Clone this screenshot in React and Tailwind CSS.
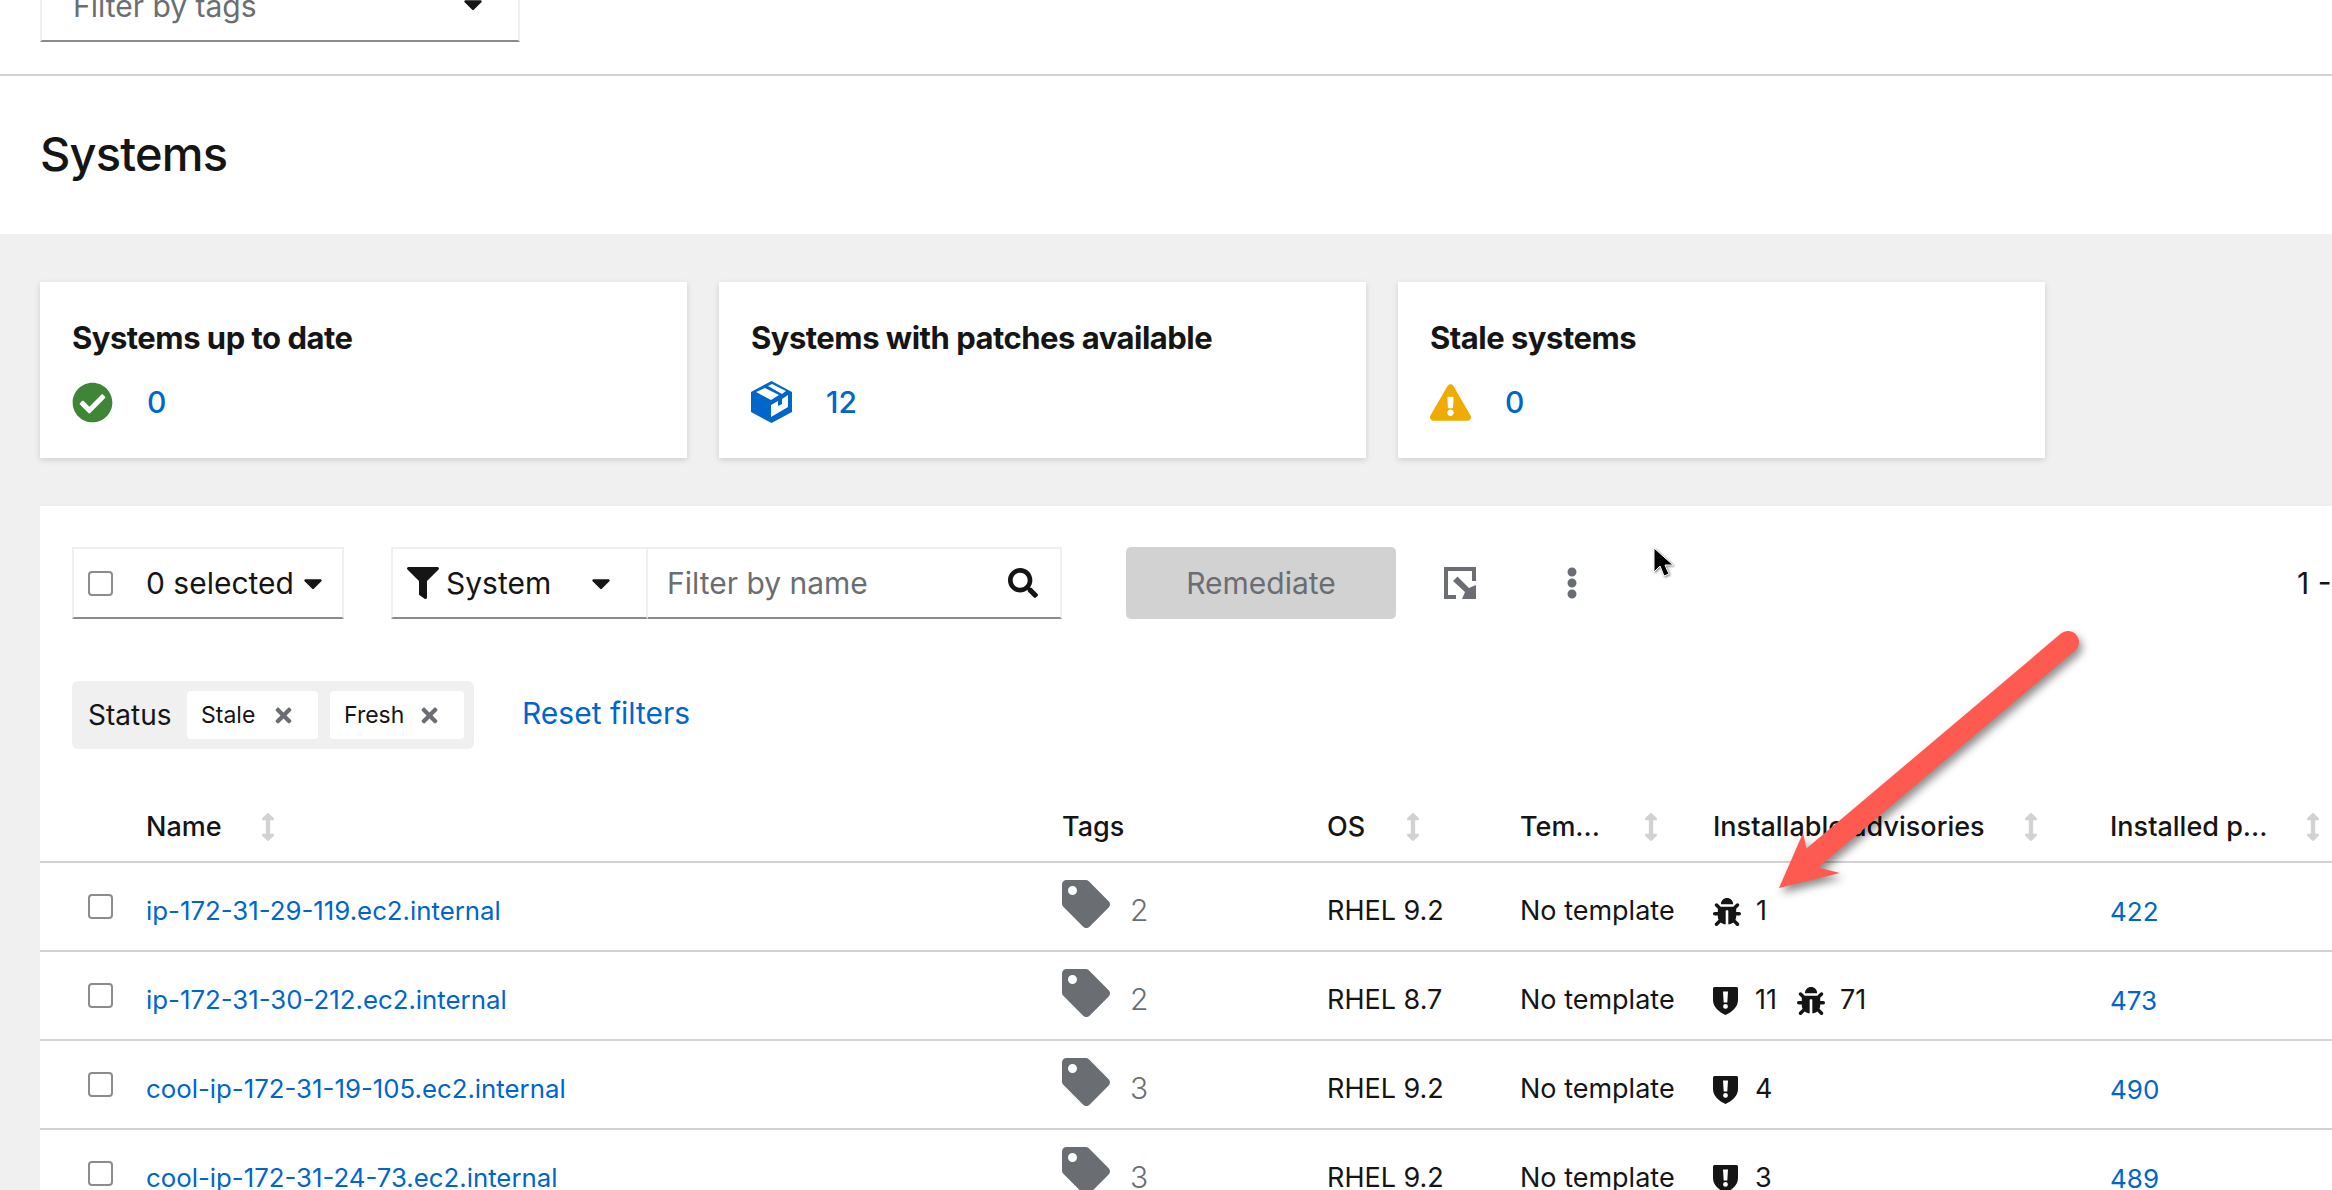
import { FaCheckCircle, FaExclamationTriangle, FaFilter, FaSearch, FaTag, FaBug, FaTimes, FaEllipsisV, FaArrowsAltV, FaCaretDown } from 'react-icons/fa'

const rows = [
  { name: 'ip-172-31-29-119.ec2.internal', tags: 2, os: 'RHEL 9.2', sec: null, bugs: 1, pkgs: 422 },
  { name: 'ip-172-31-30-212.ec2.internal', tags: 2, os: 'RHEL 8.7', sec: 11, bugs: 71, pkgs: 473 },
  { name: 'cool-ip-172-31-19-105.ec2.internal', tags: 3, os: 'RHEL 9.2', sec: 4, bugs: null, pkgs: 490 },
  { name: 'cool-ip-172-31-24-73.ec2.internal', tags: 3, os: 'RHEL 9.2', sec: 3, bugs: null, pkgs: 489 },
]

const gridCols = 'grid grid-cols-[106px_916px_265px_193px_193px_397px_1fr]'

function Caret({ className }) {
  return <FaCaretDown className={`text-[#151515] text-[30px] ${className || ''}`} />
}

function Checkbox() {
  return <span className="block w-[25px] h-[25px] rounded-[4px] border-2 border-[#8a8d90] bg-white" />
}

function PackageIcon() {
  return (
    <svg width="41" height="42" viewBox="0 0 41 42">
      <path fill="#0066cc" d="M20.5 0L41 11v20L20.5 42 0 31V11z" />
      <path fill="#fff" d="M5 11l9-4 14 7-8 5zM17 5l4-2 14 7-4 3zM20 36V24l7-4v5l4-2v-5l6-4v12z" />
    </svg>
  )
}

function ShieldIcon() {
  return (
    <svg width="25" height="28" viewBox="0 0 25 28">
      <path
        fill="#151515"
        fillRule="evenodd"
        d="M1.5 0h22A1.5 1.5 0 0 1 25 1.5V13c0 7-6 12-12.5 15C6 25 0 20 0 13V1.5A1.5 1.5 0 0 1 1.5 0zM10 4.5h5l-.7 11h-3.6zM12.5 17a2.4 2.4 0 1 0 0 4.8 2.4 2.4 0 0 0 0-4.8z"
      />
    </svg>
  )
}

function ExportIcon() {
  return (
    <svg width="32" height="32" viewBox="0 0 32 32" fill="#6a6e73">
      <path d="M0 0H32V14H28V4H4V28H12V32H0Z" />
      <path d="M9 14L13.500 9.500L25 21L32 18V32H18L21 25Z" />
    </svg>
  )
}

function SortIcon() {
  return <FaArrowsAltV className="text-[#d2d2d2] text-[28px]" />
}

function StatCard({ title, icon, value }) {
  return (
    <div className="w-[647px] h-[176px] bg-white shadow-[0_2px_6px_rgba(3,3,3,0.14)] pl-[32px] pt-[40px]">
      <div className="text-[31px] leading-[32px] font-bold text-[#151515] tracking-[-0.5px] whitespace-nowrap">{title}</div>
      <div className="flex items-center mt-[27px] h-[42px]">
        <span className="w-[75px] flex items-center">{icon}</span>
        <span className="text-[30px] font-medium text-[#0066cc]">{value}</span>
      </div>
    </div>
  )
}

function Chip({ label, width }) {
  return (
    <span className={`flex items-center justify-between h-[48px] bg-white rounded-[4px] pl-[14px] pr-[23px] text-[23px] text-[#151515] ${width}`}>
      {label}
      <FaTimes className="text-[#6a6e73] text-[23px]" />
    </span>
  )
}

function HeaderCell({ label, sortGap }) {
  return (
    <div className="flex items-center font-medium mt-[8px]">
      <span className="whitespace-nowrap">{label}</span>
      {sortGap && <span className={`flex justify-center ${sortGap}`}><SortIcon /></span>}
    </div>
  )
}

export default function App() {
  return (
    <div className="relative w-[2332px] h-[1190px] overflow-hidden bg-white font-['Inter',sans-serif] text-[#151515]">

      {/* Tag filter, cut off by the top of the window */}
      <div className="h-[76px] border-b-2 border-[#d2d2d2] flex items-end overflow-hidden pl-[40px] pb-[32px]">
        <div className="shrink-0 w-[480px] h-[72px] border-x-2 border-[#f0f0f0] border-b-2 border-b-[#8a8d90] flex items-center justify-between pl-[31px] pr-[30px] text-[30px] text-[#6a6e73]">
          <span className="pt-[3px]">Filter by tags</span>
          <Caret className="-mt-[3px]" />
        </div>
      </div>

      {/* Title */}
      <div className="h-[158px] pl-[40px] flex items-center">
        <h1 className="text-[47px] font-medium tracking-[-0.8px] -mt-[2px]">Systems</h1>
      </div>

      <div className="bg-[#f0f0f0] h-[956px] pt-[48px] pl-[40px]">
        <div className="flex gap-[32px]">
          <StatCard title="Systems up to date" value="0" icon={<FaCheckCircle className="text-[#3e8635] text-[41px]" />} />
          <StatCard title="Systems with patches available" value="12" icon={<PackageIcon />} />
          <StatCard title="Stale systems" value="0" icon={<FaExclamationTriangle className="text-[#f0ab00] text-[41px]" />} />
        </div>

        {/* Table panel */}
        <div className="mt-[48px] bg-white h-[700px] w-[2292px] overflow-hidden">
          <div className="flex items-center h-[72px] mt-[41px] ml-[32px] text-[30px]">
            <div className="shrink-0 w-[272px] h-full border-x-2 border-t-2 border-[#f0f0f0] border-b-2 border-b-[#8a8d90] flex items-center pl-[14px]">
              <Checkbox />
              <span className="ml-[33px] whitespace-nowrap">0 selected</span>
              <Caret className="ml-[4px]" />
            </div>
            <div className="shrink-0 w-[257px] ml-[47px] h-full border-x-2 border-t-2 border-[#f0f0f0] border-b-2 border-b-[#8a8d90] flex items-center pl-[14px]">
              <FaFilter className="text-[32px]" />
              <span className="ml-[7px]">System</span>
              <Caret className="ml-[35px]" />
            </div>
            <div className="shrink-0 w-[414px] h-full border-r-2 border-t-2 border-[#f0f0f0] border-b-2 border-b-[#8a8d90] flex items-center justify-between pl-[19px] pr-[22px] text-[#6a6e73]">
              <span>Filter by name</span>
              <FaSearch className="text-[#151515] text-[30px]" />
            </div>
            <button className="shrink-0 w-[270px] h-full ml-[64px] rounded-[5px] bg-[#d2d2d2] text-[#6a6e73]">Remediate</button>
            <span className="shrink-0 ml-[48px]"><ExportIcon /></span>
            <FaEllipsisV className="shrink-0 ml-[80px] text-[32px] text-[#6a6e73]" />
            <span className="shrink-0 ml-[709px] whitespace-nowrap">1 -</span>
          </div>

          {/* Active filters */}
          <div className="flex items-center mt-[62px] ml-[32px]">
            <div className="flex items-center w-[402px] h-[68px] bg-[#f0f0f0] rounded-[6px] pl-[16px]">
              <span className="w-[99px] text-[28px]">Status</span>
              <Chip label="Stale" width="w-[131px]" />
              <span className="w-[12px]" />
              <Chip label="Fresh" width="w-[134px]" />
            </div>
            <a className="ml-[48px] text-[30px] text-[#0066cc] -mt-[3px]">Reset filters</a>
          </div>

          {/* Table */}
          <div className={`${gridCols} mt-[50px] h-[64px] items-start text-[27px] border-b-2 border-[#d2d2d2]`}>
            <span />
            <HeaderCell label="Name" sortGap="ml-[32px]" />
            <HeaderCell label="Tags" />
            <HeaderCell label="OS" sortGap="ml-[34px]" />
            <HeaderCell label="Tem..." sortGap="ml-[37px]" />
            <HeaderCell label="Installable advisories" sortGap="ml-[32px]" />
            <HeaderCell label="Installed p..." sortGap="ml-[32px]" />
          </div>

          {rows.map(row => (
            <div key={row.name} className={`${gridCols} h-[89px] items-center text-[27px] border-b-2 border-[#d2d2d2]`}>
              <span className="pl-[48px]"><Checkbox /></span>
              <a className="pt-[10px] text-[25.8px] text-[#0066cc] whitespace-nowrap">{row.name}</a>
              <div className="flex items-center">
                <FaTag className="text-[#6a6e73] text-[48px] -mt-[6px]" />
                <span className="ml-[20px] text-[30px] font-light text-[#6a6e73] pt-[8px]">{row.tags}</span>
              </div>
              <span className="pt-[10px]">{row.os}</span>
              <span className="pt-[10px] whitespace-nowrap">No template</span>
              <div className="flex items-center pt-[10px]">
                {row.sec !== null && (
                  <>
                    <ShieldIcon />
                    <span className="ml-[17px] w-[42px]">{row.sec}</span>
                  </>
                )}
                {row.bugs !== null && (
                  <>
                    <FaBug className="text-[#151515] text-[28px]" />
                    <span className="ml-[15px]">{row.bugs}</span>
                  </>
                )}
              </div>
              <a className="pt-[10px] text-[26px] text-[#0066cc]">{row.pkgs}</a>
            </div>
          ))}
        </div>
      </div>

      {/* Annotation arrow drawn over the screenshot */}
      <svg className="absolute left-[1760px] top-[620px] drop-shadow-[3px_5px_4px_rgba(0,0,0,0.45)]" width="340" height="290" viewBox="1760 620 340 290">
        <path d="M2068 642L1810 860" stroke="#ff5a4f" strokeWidth="22" strokeLinecap="round" fill="none" />
        <path fill="#ff5a4f" d="M1779 888L1803 833L1808 855L1820 868L1840 873z" />
      </svg>

      {/* Mouse pointer */}
      <svg className="absolute left-[1652px] top-[546px] drop-shadow-[1px_1px_1px_rgba(0,0,0,0.5)]" width="24" height="34" viewBox="0 0 24 34">
        <path fill="#000" stroke="#fff" strokeWidth="1" d="M2 2v24l6-6 4 10 5-2-4-9h8z" />
      </svg>
    </div>
  )
}
